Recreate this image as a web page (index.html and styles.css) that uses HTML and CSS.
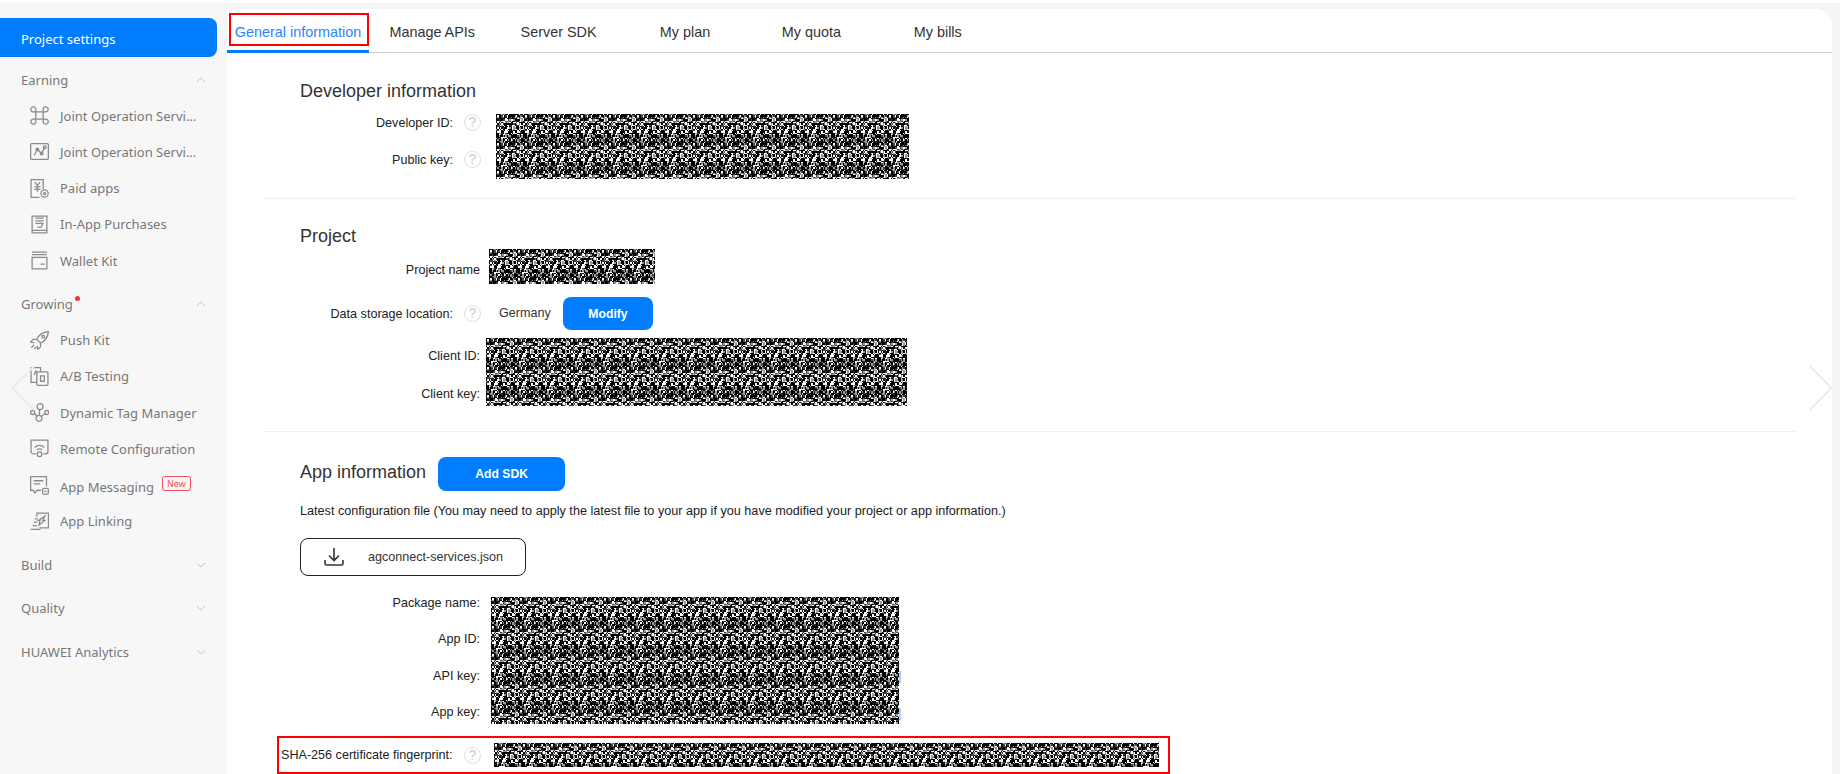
FILE: index.html
```html
<!DOCTYPE html>
<html lang="en">
<head>
<meta charset="utf-8">
<title>Project settings</title>
<link rel="stylesheet" href="styles.css">
</head>
<body>
<div class="app">
  <aside class="sidebar">
    <div class="active-item">Project settings</div>

    <section class="nav-sec">
      <div class="nav-head"><span>Earning</span><svg class="chev" viewBox="0 0 10 6"><path d="M1 5 5 1l4 4"/></svg></div>
      <div class="nav-item"><svg class="ico" viewBox="0 0 18 18"><path d="M5.500 5.500h7v7h-7zM5.500 5.500H3.700a2.400 2.400 0 1 1 1.800-2zM12.500 5.500V3.700a2.400 2.400 0 1 1 2 1.800zM12.500 12.500h1.800a2.400 2.400 0 1 1-1.800 2zM5.500 12.500v1.800a2.400 2.400 0 1 1-2-1.800z"/></svg><span class="nav-text">Joint Operation Servi...</span></div>
      <div class="nav-item"><svg class="ico" viewBox="0 0 18 18"><rect x=".6" y="1.500" width="16.800" height="15" rx="1"/><path d="m4 12.500 3-5.500 4 4 3-6"/><circle cx="7" cy="7" r="1.300"/><circle cx="11" cy="11" r="1.300"/><circle cx="14" cy="5" r="1.300"/></svg><span class="nav-text">Joint Operation Servi...</span></div>
      <div class="nav-item"><svg class="ico" viewBox="0 0 18 18"><path d="M12.500 9.500V.6H1v16.800h8"/><path d="m4.500 3 2.500 3 2.500-3M7 6v6M4 7.500h6M4 9.800h6"/><circle cx="13.800" cy="13.800" r="3.400"/><circle cx="13.800" cy="13.800" r="1"/></svg><span class="nav-text">Paid apps</span></div>
      <div class="nav-item"><svg class="ico" viewBox="0 0 18 18"><path d="M2 1h14v16H2zM2 14.500h14M5 3h8M5 5.500h8M5 8h8M12 8l-1.500 3.500H7"/></svg><span class="nav-text">In-App Purchases</span></div>
      <div class="nav-item"><svg class="ico" viewBox="0 0 18 18"><path d="M2 1h14M2 3.500h14M2 6h14v11H2zM10 12.500h4"/></svg><span class="nav-text">Wallet Kit</span></div>
    </section>

    <section class="nav-sec">
      <div class="nav-head"><span class="dotted">Growing<i class="dot"></i></span><svg class="chev" viewBox="0 0 10 6"><path d="M1 5 5 1l4 4"/></svg></div>
      <div class="nav-item"><svg class="ico" viewBox="0 0 18 18"><path d="M17.400.6c-5.400.4-9 3-11 7.400l3.600 3.400c4.500-2 7-5.600 7.400-10.800zM6.400 8 2.800 8 .6 10.500l3.400.7M10 11.400v3.400L7.500 17.400l-.8-3.400M4 13l-2.800 2.800M6 15l-2 2M12.500 4.200a1.300 1.300 0 1 0 .1 0"/></svg><span class="nav-text">Push Kit</span></div>
      <div class="nav-item"><svg class="ico" viewBox="0 0 18 18"><path d="M6.500 14.500H1V.6h9v4"/><rect x="6.500" y="4.600" width="10.500" height="12.800" rx="1"/><path d="M10 8.500h3.500v5H10zM5.500 3.500l-1.500 4M5.500 3.500l1 2.500"/></svg><span class="nav-text">A/B Testing</span></div>
      <div class="nav-item"><svg class="ico" viewBox="0 0 18 18"><circle cx="9.500" cy="3.500" r="2.800"/><circle cx="2.500" cy="9" r="1.900"/><circle cx="16" cy="9" r="1.900"/><circle cx="8.500" cy="14.500" r="2.800"/><path d="m4.200 10 2.500 2.500M9 6.300v5.400M14.300 10l-3.600 2.800"/></svg><span class="nav-text">Dynamic Tag Manager</span></div>
      <div class="nav-item"><svg class="ico" viewBox="0 0 18 18"><path d="M5.500 14H3a2 2 0 0 1-2-2V1h16v11a2 2 0 0 1-2 2h-2.500"/><path d="M4.500 8c2.500-2.500 6.500-2.500 9 0M6.500 10.500c1.500-1.300 3.500-1.300 5 0"/><circle cx="9" cy="14.500" r="2.200"/></svg><span class="nav-text">Remote Configuration</span></div>
      <div class="nav-item nav-msg"><svg class="ico" viewBox="0 0 18 18"><path d="M10.500 13.500H7l-2.500 2.500L3 13.500H.6V.6h15v9"/><path d="M3.500 4.500h9M3.500 7.500h6"/><rect x="12" y="11.800" width="5.400" height="5.400" rx="1"/><path d="M13.500 14.500h2.400"/></svg><span class="nav-text">App Messaging</span><span class="badge">New</span></div>
      <div class="nav-item"><svg class="ico" viewBox="0 0 18 18"><path d="M6.500 4.500V1h11v14H9M.6 16.500H10M2.500 13h4M3.500 9.500h3.500M4.500 6.500h3"/><path d="m8 8 6-4-2 4h2l-5.500 4.500L9.500 8z"/></svg><span class="nav-text">App Linking</span></div>
    </section>

    <section class="nav-sec closed">
      <div class="nav-head"><span>Build</span><svg class="chev" viewBox="0 0 10 6"><path d="m1 1 4 4 4-4"/></svg></div>
    </section>
    <section class="nav-sec closed">
      <div class="nav-head"><span>Quality</span><svg class="chev" viewBox="0 0 10 6"><path d="m1 1 4 4 4-4"/></svg></div>
    </section>
    <section class="nav-sec closed">
      <div class="nav-head"><span>HUAWEI Analytics</span><svg class="chev" viewBox="0 0 10 6"><path d="m1 1 4 4 4-4"/></svg></div>
    </section>
  </aside>

  <main class="main">
    <nav class="tabs">
      <div class="tab tab-active">General information<i class="mark-tab"></i></div>
      <div class="tab">Manage APIs</div>
      <div class="tab">Server SDK</div>
      <div class="tab">My plan</div>
      <div class="tab">My quota</div>
      <div class="tab">My bills</div>
    </nav>

    <section class="block block-dev">
      <h2 class="title">Developer information</h2>
      <div class="kv">
        <div class="labels labels-37">
          <div class="row"><span class="label w189">Developer ID:</span><span class="help">?</span></div>
          <div class="row"><span class="label w189">Public key:</span><span class="help">?</span></div>
        </div>
        <div class="noise n-dev"></div>
      </div>
    </section>

    <section class="block block-project">
      <h2 class="title">Project</h2>
      <div class="kv">
        <span class="label w216 name-label">Project name</span>
        <div class="noise n-name"></div>
      </div>
      <div class="row storage">
        <span class="label w189">Data storage location:</span><span class="help">?</span>
        <span class="germany">Germany</span>
        <span class="btn btn-modify">Modify</span>
      </div>
      <div class="kv client">
        <div class="labels labels-38">
          <div class="row"><span class="label w216">Client ID:</span></div>
          <div class="row"><span class="label w216">Client key:</span></div>
        </div>
        <div class="noise n-client"></div>
      </div>
    </section>

    <section class="block block-app">
      <div class="app-head">
        <h2 class="title title-inline">App information</h2>
        <span class="btn btn-sdk">Add SDK</span>
      </div>
      <p class="hint">Latest configuration file (You may need to apply the latest file to your app if you have modified your project or app information.)</p>
      <div class="file-btn">
        <svg class="dl" viewBox="0 0 20 20"><path d="M10 1v12M5 8.500l5 5 5-5M1 13v3.500A1.500 1.500 0 0 0 2.500 18h15a1.500 1.500 0 0 0 1.500-1.500V13"/></svg>
        <span>agconnect-services.json</span>
      </div>
      <div class="kv app-kv">
        <div class="labels labels-36">
          <div class="row"><span class="label w216">Package name:</span></div>
          <div class="row"><span class="label w216">App ID:</span></div>
          <div class="row"><span class="label w216">API key:</span></div>
          <div class="row"><span class="label w216">App key:</span></div>
        </div>
        <div class="noise n-app"><i class="sel sel-a"></i><i class="sel sel-b"></i></div>
      </div>
      <div class="sha">
        <span class="sha-label">SHA-256 certificate fingerprint:</span><span class="help">?</span>
        <div class="noise n-sha"></div>
      </div>
    </section>
  </main>
</div>

<svg class="arrow arrow-l" viewBox="0 0 26 48"><path d="M25 1 2 24l23 23"/></svg>
<svg class="arrow arrow-r" viewBox="0 0 26 48"><path d="m1 1 23 23L1 47"/></svg>

<script src="noise.js"></script>
</body>
</html>
```
FILE: styles.css
```css
* { box-sizing: border-box; }
html, body { margin: 0; height: 774px; overflow: hidden; background: linear-gradient(#fff 3px, #f5f5f5 3px); }
body { font-family: "Liberation Sans", Arial, sans-serif; color: #222; position: relative; }
.app { display: flex; height: 774px; overflow: hidden; }

/* sidebar */
.sidebar { width: 227px; flex: none; padding-top: 18px; background: linear-gradient(#fff 3px, #f7f7f7 3px); font-family: "Noto Sans", sans-serif; font-size: 13px; color: #777; }
.active-item { width: 217px; height: 39px; padding: 2px 0 0 21px; display: flex; align-items: center; background: #007dff; border-radius: 0 8px 8px 0; color: #fff; font-size: 13px; margin-bottom: 4.500px; }
.nav-sec { margin-bottom: 7.300px; }
.nav-sec.closed { margin-bottom: 7.500px; }
.nav-head { height: 36px; padding: 0 21px; display: flex; align-items: center; justify-content: space-between; }
.chev { width: 10px; height: 6px; fill: none; stroke: #c8c8c8; stroke-width: 1; }
.dotted { position: relative; }
.dot { position: absolute; right: -7px; top: 1px; width: 5px; height: 5px; border-radius: 50%; background: #f5323c; }
.nav-item { height: 36.250px; padding-left: 30px; display: flex; align-items: center; white-space: nowrap; }
.ico { width: 19px; height: 19px; flex: none; margin-right: 11px; fill: none; stroke: #8a8a8a; stroke-width: 1.200; }
.nav-text { display: block; }
.nav-msg .nav-text { padding-top: 3px; }
.badge { margin-left: 8px; height: 15px; width: 29px; display: flex; align-items: center; justify-content: center; border: 1px solid #f0505a; border-radius: 3px; font-size: 9px; color: #f0505a; margin-top: -3px; }

/* main */
.main { width: 1605px; flex: none; margin-top: 9px; height: 765px; background: #fff; border-radius: 0 16px 0 0; }
.tabs { display: flex; height: 44px; border-bottom: 1px solid #ccc; font-size: 14.400px; color: #333; }
.tab { width: 126.400px; height: 44px; display: flex; align-items: center; justify-content: center; padding-top: 2px; position: relative; }
.tab-active { width: 142px; color: #2a84ff; border-bottom: 3px solid #007dff; padding-top: 4px; }
.mark-tab { position: absolute; left: 2px; top: 4px; width: 140px; height: 33px; border: 2px solid #f00; }

.block { margin: 0 37px; border-bottom: 1px solid #eee; }
.block-dev { height: 146px; padding-top: 26px; }
.block-project { height: 233px; padding-top: 25px; }
.block-app { border-bottom: 0; padding-top: 25px; }
.title { margin: 0 0 0 36px; font-size: 18px; font-weight: 400; line-height: 24px; color: #333; }
.block-dev .title { margin-bottom: 1px; }

.kv { display: flex; align-items: flex-start; }
.labels-37 .row { height: 37px; }
.labels-38 .row { height: 38px; }
.labels-36 .row { height: 36.300px; }
.row { display: flex; align-items: center; }
.label { font-size: 12.600px; text-align: right; flex: none; color: #222; }
.w189 { width: 189px; }
.w216 { width: 216px; }
.help { width: 17px; height: 17px; margin-left: 11px; flex: none; border: 1px solid #ddd; border-radius: 50%; color: #ccc; font-size: 14px; line-height: 15px; text-align: center; }

.noise { flex: none; position: relative; background: #222; }
.noise canvas { display: block; }
.n-dev { width: 413px; height: 65px; margin: 9.500px 0 0 15px; }
.n-name { width: 166px; height: 35px; margin: 1px 0 0 9px; }
.n-client { width: 421px; height: 68px; margin: 1px 0 0 6px; }
.n-app { width: 408px; height: 127px; margin: 12px 0 0 11px; }
.n-sha { width: 665px; height: 24px; margin-left: 13px; }
.name-label { padding-top: 15px; }

.storage { margin-top: 13px; height: 33px; }
.germany { font-size: 12.600px; margin-left: 18px; width: 64px; color: #333; margin-top: -2px; }
.btn { display: flex; align-items: center; justify-content: center; background: #007dff; color: #fff; font-size: 12.200px; font-weight: 700; border-radius: 8px; }
.btn-modify { width: 90px; height: 33px; }
.client { margin-top: 7px; }

.app-head { display: flex; align-items: center; height: 34px; }
.title-inline { margin-top: -4px; }
.btn-sdk { width: 127px; height: 34px; margin-left: 12px; }
.hint { margin: 12px 0 0 36px; font-size: 12.650px; line-height: 16px; color: #222; white-space: nowrap; }
.file-btn { margin: 19px 0 0 36px; width: 226px; height: 38px; border: 1px solid #222; border-radius: 8px; display: flex; align-items: center; padding-left: 23px; font-size: 12.600px; color: #333; }
.dl { width: 20px; height: 20px; margin-right: 24px; fill: none; stroke: #333; stroke-width: 1.600; }
.app-kv { margin-top: 9px; }
.sel { position: absolute; right: -2px; width: 2px; height: 12px; background: #a9d0ff; }
.sel-a { top: 74px; }
.sel-b { top: 111px; }
.sha { margin: 6px 0 0 13px; width: 893px; height: 38px; border: 2px solid #f00; display: flex; align-items: center; padding-left: 2px; }
.sha-label { font-size: 12.600px; width: 172px; flex: none; white-space: nowrap; color: #222; }
.sha .help { margin-left: 11px; }

/* carousel arrows */
.arrow { position: absolute; top: 365px; width: 26px; height: 46px; fill: none; stroke: #ebebeb; stroke-width: 2; }
.arrow-l { left: 10px; }
.arrow-r { left: 1808px; }
```
FILE: noise.js
```js
// Draws the scrambled (redacted) blocks from one repeating noise tile.
(function () {
  var CELLS = 21;
  var SIZE = 28;
  var seed = 20231;
  function rnd() {
    seed = (seed * 1664525 + 1013904223) >>> 0;
    return seed / 4294967296;
  }
  var cells = document.createElement('canvas');
  cells.width = cells.height = CELLS;
  var t = cells.getContext('2d');
  for (var y = 0; y < CELLS; y++) {
    for (var x = 0; x < CELLS; x++) {
      var v = rnd();
      t.fillStyle = v < 0.46 ? '#000' : v < 0.6 ? '#444' : v < 0.78 ? '#999' : '#fff';
      t.fillRect(x, y, 1, 1);
    }
  }
  // short diagonal white streak, as in the reference
  t.fillStyle = '#fff';
  for (var k = 0; k < 4; k++) {
    t.fillRect(6 + k, 14 - k * 2, 1, 2);
  }
  // upscale without smoothing: gives the reference's uneven 1-2px grain
  var tile = document.createElement('canvas');
  tile.width = tile.height = SIZE;
  var u = tile.getContext('2d');
  u.imageSmoothingEnabled = false;
  u.drawImage(cells, 0, 0, SIZE, SIZE);

  var blocks = document.querySelectorAll('.noise');
  for (var b = 0; b < blocks.length; b++) {
    var el = blocks[b];
    var c = document.createElement('canvas');
    c.width = el.clientWidth;
    c.height = el.clientHeight;
    var g = c.getContext('2d');
    g.fillStyle = g.createPattern(tile, 'repeat');
    g.fillRect(0, 0, c.width, c.height);
    el.insertBefore(c, el.firstChild);
  }
})();
```
